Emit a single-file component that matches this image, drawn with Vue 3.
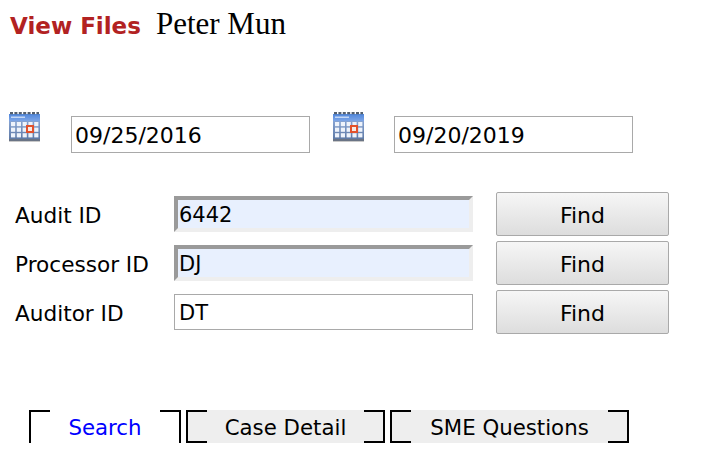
<script setup>
const idRows = [
  { label: "Audit ID", value: "6442", filled: true },
  { label: "Processor ID", value: "DJ", filled: true },
  { label: "Auditor ID", value: "DT", filled: false },
];

const dates = ["09/25/2016", "09/20/2019"];

const tabs = [
  { name: "Search", active: true, width: "152px" },
  { name: "Case Detail", active: false, width: "199px" },
  { name: "SME Questions", active: false, width: "239px" },
];

const cols = [0, 1, 2, 3, 4];
const cells = [0, 1, 2];
</script>

<template>
  <div class="page">
    <header class="title-row">
      <span class="view-files">View Files</span>
      <span class="user-name">Peter Mun</span>
    </header>

    <section class="date-row">
      <div v-for="(d, i) in dates" :key="d" class="date-field">
        <svg class="cal" width="31" height="30" viewBox="0 0 31 30">
          <defs>
            <linearGradient :id="'calHead' + i" x1="0" y1="0" x2="0" y2="1">
              <stop offset="0" stop-color="#4f86dc" />
              <stop offset="1" stop-color="#7ea6e6" />
            </linearGradient>
            <linearGradient :id="'calBody' + i" x1="0" y1="0" x2="0" y2="1">
              <stop offset="0" stop-color="#86a3d2" />
              <stop offset="1" stop-color="#5f7aa6" />
            </linearGradient>
          </defs>
          <rect x="0" y="2" width="31" height="7" :fill="'url(#calHead' + i + ')'" />
          <path d="M1 1H30" stroke="#55606e" stroke-width="2.4" stroke-dasharray="3 1.4" />
          <rect x="2" y="4.5" width="14" height="1.5" fill="#c4d8f6" />
          <rect x="0" y="9" width="31" height="18" :fill="'url(#calBody' + i + ')'" />
          <template v-for="c in cols" :key="c">
            <rect
              v-for="r in cells"
              :key="r"
              :x="2 + c * 5.8"
              :y="10 + r * 5.6"
              width="4.2"
              height="4.2"
              fill="#eef3fb"
            />
          </template>
          <rect x="18" y="14" width="6" height="6" fill="#f5ebe6" stroke="#e2512c" stroke-width="2" />
          <rect x="0" y="27" width="31" height="2" fill="#6a7485" />
          <rect x="0" y="29" width="31" height="1" fill="#c9c9c9" />
        </svg>
        <input class="date-input" type="text" :value="d" />
      </div>
    </section>

    <section class="id-rows">
      <div v-for="row in idRows" :key="row.label" class="id-row">
        <label class="id-label">{{ row.label }}</label>
        <input class="id-input" :class="{ filled: row.filled }" type="text" :value="row.value" />
        <button class="find" type="button">Find</button>
      </div>
    </section>

    <nav class="tabs">
      <a
        v-for="tab in tabs"
        :key="tab.name"
        class="tab"
        :class="{ active: tab.active }"
        :style="{ width: tab.width }"
      >{{ tab.name }}</a>
    </nav>
  </div>
</template>

<style scoped>
.page {
  width: 710px;
  height: 465px;
  overflow: hidden;
  font-family: "DejaVu Sans", sans-serif;
  color: #000;
  background: #fff;
}

.title-row {
  display: flex;
  align-items: baseline;
  gap: 15px;
  padding: 6px 0 0 10px;
  height: 104px;
  box-sizing: border-box;
}

.view-files {
  font-size: 23px;
  font-weight: bold;
  color: #b22222;
}

.user-name {
  font-family: "Liberation Serif", serif;
  font-size: 31px;
}

.date-row {
  display: flex;
  padding-left: 9px;
  gap: 23px;
  height: 88px;
}

.date-field {
  display: flex;
  align-items: flex-start;
  gap: 31px;
}

.date-field + .date-field {
  gap: 30px;
}

.cal {
  margin-top: 8px;
  filter: blur(0.35px);
}

.date-input {
  width: 239px;
  height: 37px;
  margin-top: 12px;
  box-sizing: border-box;
  border: 1px solid #a9a9a9;
  padding: 1px 3px 0;
  font: 22px "DejaVu Sans", sans-serif;
}

.id-rows {
  display: flex;
  flex-direction: column;
  gap: 5px;
}

.id-row {
  display: flex;
  align-items: center;
  height: 44px;
  padding-left: 15px;
}

.id-label {
  width: 159px;
  font-size: 21.6px;
  padding-top: 2px;
}

.id-input {
  width: 299px;
  height: 36px;
  box-sizing: border-box;
  border: 1px solid #a9a9a9;
  padding: 1px 4px 0;
  font: 21px "DejaVu Sans", sans-serif;
  margin-right: 23px;
}

.id-input.filled {
  background: #e8f0fe;
  border-width: 4px;
  border-style: solid;
  border-color: #9a9a9a #eeeeee #eeeeee #9a9a9a;
  padding: 1px 1px 0;
}

.find {
  width: 173px;
  height: 44px;
  box-sizing: border-box;
  border: 1px solid #a9a9a9;
  border-radius: 2px;
  padding: 2px 0 0;
  background: linear-gradient(#f6f6f6, #dddddd);
  font: 22px "DejaVu Sans", sans-serif;
  color: #000;
}

.tabs {
  display: flex;
  gap: 5px;
  margin-top: 76px;
  padding-left: 29px;
}

.tab {
  position: relative;
  height: 33px;
  box-sizing: border-box;
  background: #eeeeee;
  text-align: center;
  font-size: 21.3px;
  line-height: 35px;
}

.tab.active {
  background: #fff;
  color: #0000ff;
}

.tab::before,
.tab::after {
  content: "";
  position: absolute;
  top: 0;
  bottom: 0;
  width: 21px;
  box-sizing: border-box;
  border-top: 2px solid #000;
  border-bottom: 2px solid #000;
}

.tab::before {
  left: 0;
  border-left: 2px solid #000;
}

.tab::after {
  right: 0;
  border-right: 2px solid #000;
}

.tab.active::before,
.tab.active::after {
  border-bottom: none;
}
</style>
